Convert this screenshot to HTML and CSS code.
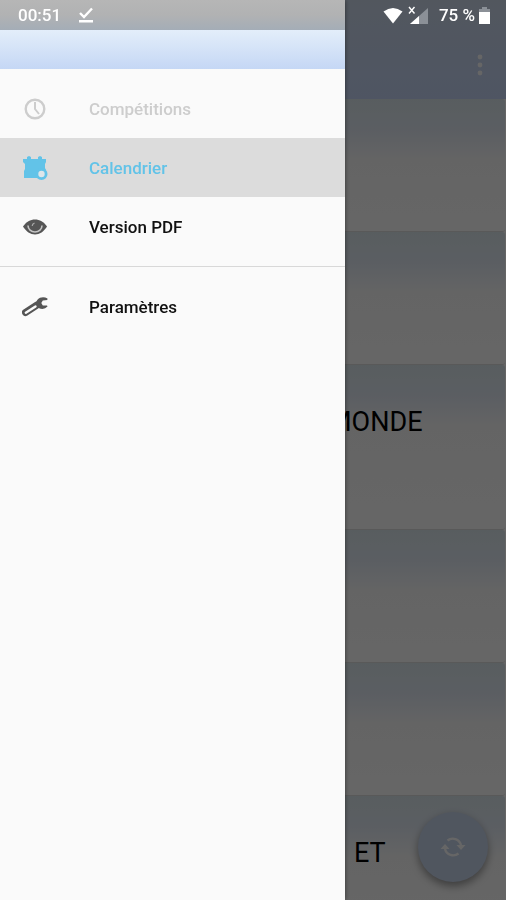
FILE: index.html
```html
<!DOCTYPE html>
<html lang="fr">
<head>
  <meta charset="UTF-8">
  <meta name="viewport" content="width=device-width, initial-scale=1.0">
  <title>Calendrier</title>
  <link rel="stylesheet" href="styles.css">
</head>
<body>
  <div class="page">
    <header class="appbar">
      <button class="more" aria-label="Plus d'options">
        <svg width="6" height="22" viewBox="0 0 6 22" fill="#fff"><circle cx="3" cy="3" r="2.4"/><circle cx="3" cy="11" r="2.4"/><circle cx="3" cy="19" r="2.4"/></svg>
      </button>
    </header>
    <main class="list">
      <article class="card"></article>
      <article class="card"></article>
      <article class="card card-tall"><h2>MONDE</h2></article>
      <article class="card"></article>
      <article class="card"></article>
      <article class="card"><h2>ET</h2></article>
    </main>
    <button class="fab" aria-label="Actualiser">
      <svg width="26" height="24" viewBox="0 0 26 24" fill="none" stroke="#fff" stroke-width="2.4">
        <path d="M7.5 5.5A8.5 8.5 0 0 1 21 10M18.5 18.5A8.5 8.5 0 0 1 5 14"/>
        <path d="M16.5 10h9l-4.500 5zM.5 14h9L5 9z" fill="#fff" stroke="none"/>
      </svg>
    </button>
  </div>

  <div class="scrim"></div>

  <aside class="drawer">
    <div class="drawer-status"></div>
    <div class="drawer-header"></div>
    <nav class="menu">
      <a class="item item-disabled" href="#competitions">
        <svg width="26" height="26" viewBox="0 0 26 26" fill="none" stroke="currentColor" stroke-width="2.4"><circle cx="13" cy="13" r="9.3"/><path d="M13 6v7l4 5" stroke-width="2"/></svg>
        <span>Compétitions</span>
      </a>
      <a class="item item-active" href="#calendrier">
        <svg width="26" height="26" viewBox="0 0 26 26" fill="currentColor"><path d="M1 4h4V2l2-1 2 1v2h7V2l2-1 2 1v2h4v3l-1 2v4l1 2v8H2v-7l1-2V9L1 7z"/><circle cx="19.5" cy="19" r="4.6" fill="#dde6ea" stroke="currentColor" stroke-width="2.8"/></svg>
        <span>Calendrier</span>
      </a>
      <a class="item" href="#pdf">
        <svg width="26" height="26" viewBox="0 0 26 26" fill="#555"><path d="M1 12.500C4 8 8.500 5.500 13 5.500S22 8 25 12.500C22 17.500 17.500 20.500 13 20.500S4 17.500 1 12.500z"/><path d="M6 11.500A7 6.500 0 0 0 20 11.500" fill="none" stroke="#c4c4c4" stroke-width="1.600"/><path d="M10.200 12A3 3 0 0 1 12.500 9.200" fill="none" stroke="#aaa" stroke-width="1.200"/></svg>
        <span>Version PDF</span>
      </a>
      <hr class="divider">
      <a class="item" href="#parametres">
        <svg width="26" height="26" viewBox="0 0 26 26"><path d="M15 11L3.500 18.500" stroke="#555" stroke-width="7" stroke-linecap="round"/><path d="M13.500 12.500L3.800 18.700" stroke="#fafafa" stroke-width="2.400" stroke-linecap="round"/><path d="M25.500 4.500Q22 2.500 18 3.800Q14.500 5.500 14 9.500L17.500 14.500Q22.500 16 25.500 12.500L25 11.600L20.800 11.500L19.300 9L20.800 6.500L25.300 6z" fill="#555"/></svg>
        <span>Paramètres</span>
      </a>
    </nav>
  </aside>

  <div class="statusbar">
    <span class="clock">00:51</span>
    <svg width="14" height="16" viewBox="0 0 14 16" fill="none" stroke="#fff" stroke-width="2.4"><path d="M1 6l4 4 8-8.500M0 14.300h14"/></svg>
    <div class="status-right">
      <svg width="20" height="17" viewBox="0 0 20 17" fill="#fff"><path d="M.5 4.500Q10-2.500 19.500 4.500L10 16.500z"/></svg>
      <svg class="signal" width="22" height="19" viewBox="0 0 22 19"><path d="M21 2v16H3z" fill="#8b9097"/><path d="M12 10v8H3z" fill="#fff"/><path d="M2 1l5.500 6.500M7.500 1L2 7.500" stroke="#fff" stroke-width="1.400"/></svg>
      <span>75 %</span>
      <svg width="11" height="17" viewBox="0 0 11 17"><path d="M3 0h5v2h3v5H0V2h3z" fill="#8b9097"/><path d="M0 5h11v12H0z" fill="#fff"/></svg>
    </div>
  </div>
</body>
</html>
```

FILE: styles.css
```css
* {
  box-sizing: border-box;
}
body {
  margin: 0;
  font-family: Roboto, sans-serif;
  color: #000;
  background-color: #fff;
}
.page {
  height: 100vh;
  overflow: hidden;
}
button {
  border: none;
  padding: 0;
  cursor: pointer;
}
.appbar {
  height: 99px;
  padding: 30px 23px 0;
  display: flex;
  align-items: center;
  justify-content: flex-end;
  background: linear-gradient(#cddaec, #c5d5f7);
}
.more {
  display: flex;
  background: none;
}
.card {
  height: 133px;
  padding-top: 41px;
  margin-right: 1px;
  border-bottom: 1px solid #dedede;
  border-radius: 3px;
  background: linear-gradient(#dde9ee, #e3ebf6 30px, #fbfbfb 62px, #fff);
}
.card-tall {
  height: 165px;
}
.card h2 {
  margin: 0;
  padding-left: 328px;
  font-size: 27px;
  line-height: 32px;
  font-weight: 400;
}
.card:last-child h2 {
  padding-left: 354px;
}
.fab {
  position: fixed;
  right: 18px;
  bottom: 18px;
  width: 70px;
  height: 70px;
  display: flex;
  align-items: center;
  justify-content: center;
  border-radius: 50%;
  background-color: #c8d6ee;
  box-shadow: 0 4px 8px rgba(0, 0, 0, 0.4);
}
.scrim {
  position: fixed;
  inset: 0;
  background-color: rgba(0, 0, 0, 0.6);
}

/* Drawer */
.drawer {
  position: fixed;
  top: 0;
  bottom: 0;
  left: 0;
  width: 345px;
  background-color: #fafafa;
  box-shadow: 0 0 5px rgba(0, 0, 0, 0.5);
}
.drawer-status {
  height: 30px;
  background: linear-gradient(#b6b6b6, #b1b2b3 50%, #a4adb7);
}
.drawer-header {
  height: 39px;
  background: linear-gradient(#e3eefa, #c5d7f5);
}
.menu {
  padding-top: 10px;
}
.item {
  height: 59px;
  padding-left: 22px;
  display: flex;
  align-items: center;
  gap: 41px;
  color: #111;
  font-size: 17px;
  font-weight: 500;
  text-decoration: none;
}
.item-disabled {
  color: #cdcdcd;
}
.item-active {
  color: #62c3e8;
  background-color: #dcdcdc;
}
.divider {
  margin: 10px 0;
  border: none;
  border-top: 1px solid #d8d8d8;
}

/* Status bar */
.statusbar {
  position: fixed;
  top: 0;
  left: 0;
  right: 0;
  height: 30px;
  padding: 0 16px 0 18px;
  display: flex;
  align-items: center;
  gap: 18px;
  color: #fff;
  font-size: 17px;
  font-weight: 500;
}
.status-right {
  margin-left: auto;
  display: flex;
  align-items: center;
  gap: 4px;
}
.signal {
  margin-right: 6px;
}
```
